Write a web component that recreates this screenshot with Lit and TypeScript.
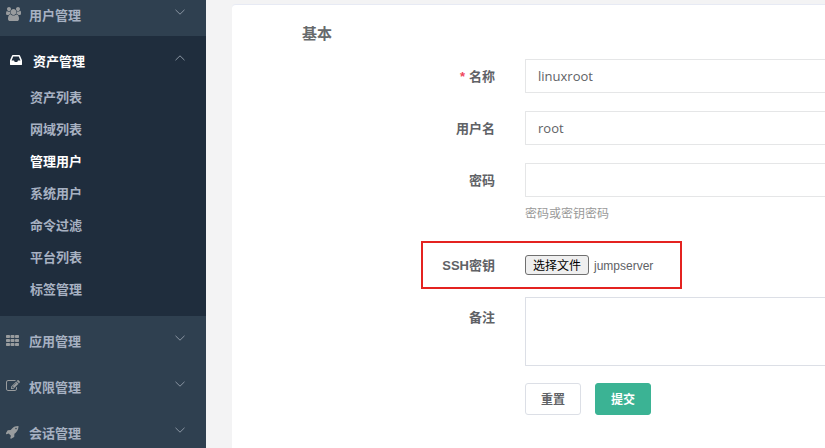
import { LitElement, html, css, svg } from "lit";
import { customElement, state } from "lit/decorators.js";

const icons = {
  users: { box: "0 0 1920 1792", body: svg`<path d="M593 896q-162 5-265 128h-134q-82 0-138-40.5t-56-118.5q0-353 124-353 6 0 43.5 21t97.5 42.5 119 21.5q67 0 133-23-5 37-5 66 0 154 86 284zm1071 637q0 120-73 189.5t-194 69.5h-874q-121 0-194-69.5t-73-189.5q0-53 3.5-103.5t14-109 26.5-108.5 43-97.5 62-81 85.5-53.5 111.5-20q10 0 43 21.5t73 48 107 48 135 21.5 135-21.5 107-48 73-48 43-21.5q61 0 111.5 20t85.5 53.5 62 81 43 97.5 26.5 108.5 14 109 3.5 103.5zm-1024-1277q0 106-75 181t-181 75-181-75-75-181 75-181 181-75 181 75 75 181zm704 384q0 159-112.5 271.5t-271.5 112.5-271.5-112.5-112.5-271.5 112.5-271.5 271.5-112.5 271.5 112.5 112.5 271.5zm576 225q0 78-56 118.5t-138 40.5h-134q-103-123-265-128 93-137 93-290 0-29-5-66 66 23 133 23 59 0 119-21.5t97.5-42.5 43.5-21q124 0 124 353zm-128-609q0 106-75 181t-181 75-181-75-75-181 75-181 181-75 181 75 75 181z"/>` },
  inbox: { box: "128 0 1792 1792", body: svg`<path d="M1151 960h316q-1-3-2.5-8t-2.5-8l-212-496h-708l-212 496q-1 2-2.5 8t-2.5 8h316l95 192h320zm513 30v482q0 26-19 45t-45 19h-1408q-26 0-45-19t-19-45v-482q0-62 25-123l238-552q10-25 36.5-42t52.5-17h832q26 0 52.5 17t36.5 42l238 552q25 61 25 123z"/>` },
  grid: { box: "64 0 1792 1792", body: [256, 768, 1280].map((y) => [64, 640, 1216].map((x) => svg`<rect x=${x} y=${y} width="512" height="384" rx="96"/>`)) },
  edit: { box: "0 0 1792 1792", body: svg`<path d="M888 1184l116-116-152-152-116 116v56h96v96h56zm440-720q-16-16-33 1l-350 350q-17 17-1 33t33-1l350-350q17-17 1-33zm80 594v190q0 119-84.5 203.5t-203.5 84.5h-832q-119 0-203.5-84.5t-84.5-203.5v-832q0-119 84.5-203.5t203.5-84.5h832q63 0 117 25 15 7 18 23 3 17-9 29l-49 49q-14 14-32 8-23-6-45-6h-832q-66 0-113 47t-47 113v832q0 66 47 113t113 47h832q66 0 113-47t47-113v-126q0-13 9-22l64-64q15-15 35-7t20 29zm-96-738l288 288-672 672h-288v-288zm444 132l-92 92-288-288 92-92q28-28 68-28t68 28l152 152q28 28 28 68t-28 68z"/>` },
  rocket: { box: "64 0 1792 1792", body: svg`<path d="M1440 448q0-40-28-68t-68-28-68 28-28 68 28 68 68 28 68-28 28-68zm224-288q0 249-75.5 430.5t-253.5 360.5q-81 80-195 176l-20 379q-2 16-16 26l-384 224q-7 4-16 4-12 0-23-9l-64-64q-13-14-8-32l85-276-281-281-276 85q-3 1-9 1-14 0-23-9l-64-64q-17-19-5-39l224-384q10-14 26-16l379-20q96-114 176-195 188-187 358-258t431-71q14 0 24 9.5t10 22.5z"/>` },
};

type IconName = keyof typeof icons;

interface Section {
  label: string;
  icon: IconName;
  children?: string[];
}

const sections: Section[] = [
  { label: "用户管理", icon: "users" },
  {
    label: "资产管理",
    icon: "inbox",
    children: ["资产列表", "网域列表", "管理用户", "系统用户", "命令过滤", "平台列表", "标签管理"],
  },
  { label: "应用管理", icon: "grid" },
  { label: "权限管理", icon: "edit" },
  { label: "会话管理", icon: "rocket" },
];

@customElement("side-nav")
class SideNav extends LitElement {
  static styles = css`
    :host {
      display: block;
      flex: none;
      width: 206px;
      overflow: hidden;
      background: #2f4050;
      color: #a7b1c2;
      font-family: Inter, "Noto Sans CJK SC", sans-serif;
      font-size: 13px;
      font-weight: 700;
    }
    .sections, .children { list-style: none; margin: 0; padding: 0; }
    /* The menu is scrolled down by part of its first entry. */
    .sections { margin-top: -10px; }
    a { color: inherit; text-decoration: none; }
    .head {
      display: flex;
      align-items: center;
      height: 46px;
      padding: 4px 21px 0 6px;
      box-sizing: border-box;
    }
    .icon { height: 14px; width: 14px; margin-bottom: 2px; fill: #999c9e; }
    .icon.users { width: 15px; }
    .label { flex: 1; margin-left: 9px; line-height: 20px; }
    .users + .label { margin-left: 8px; }
    .arrow {
      width: 10px;
      height: 6px;
      margin-bottom: 6px;
      fill: none;
      stroke: #8a95a2;
    }
    .open { background: #1f2d3d; padding-bottom: 11px; }
    .open .head { color: #fff; height: 45px; padding: 5px 21px 0 10px; }
    .open .icon { fill: #fff; }
    .child { display: block; padding: 6px 0 6px 30px; line-height: 20px; }
    .child.current { color: #fff; }
  `;

  render() {
    return html`<nav aria-label="主菜单">
      <ul class="sections">
        ${sections.map((s) => html`<li class=${s.children ? "open" : "closed"}>
          <a class="head" href="#">
            <svg class="icon ${s.icon}" viewBox=${icons[s.icon].box} aria-hidden="true">${icons[s.icon].body}</svg>
            <span class="label">${s.label}</span>
            <svg class="arrow" viewBox="0 0 10 6" aria-hidden="true">
              <path d=${s.children ? "M.5 5.2 5 .8l4.5 4.4" : "M.5 .8 5 5.2l4.5-4.4"} />
            </svg>
          </a>
          ${s.children
            ? html`<ul class="children">
                ${s.children.map((c) => html`<li><a class="child ${c === "管理用户" ? "current" : ""}" href="#">${c}</a></li>`)}
              </ul>`
            : null}
        </li>`)}
      </ul>
    </nav>`;
  }
}

@customElement("admin-user-form")
class AdminUserForm extends LitElement {
  static styles = css`
    :host {
      display: block;
      flex: 1;
      min-width: 0;
      margin: 4px 0 0 26px;
      background: #fff;
      border: solid #e7eaf4;
      border-width: 1px 0 0 0;
      border-radius: 4px 0 0 0;
      color: #606266;
      font-size: 13px;
    }
    h3 {
      margin: 0 0 14px 70px;
      padding-top: 18px;
      font-size: 15px;
      line-height: 22px;
      font-weight: 700;
      color: #676a6c;
    }
    .row {
      display: grid;
      grid-template-columns: 263px minmax(0, 1fr);
      column-gap: 30px;
      margin-bottom: 18px;
    }
    .label { height: 34px; text-align: right; line-height: 36px; font-weight: 700; }
    .required::before { content: "*"; color: #f0475c; margin-right: 4px; }
    .box {
      display: block;
      box-sizing: border-box;
      width: 100%;
      height: 34px;
      margin: 0;
      padding: 0 12px;
      border: solid #e5e6e7;
      border-width: 1px 0 1px 1px;
      border-radius: 1px 0 0 1px;
      background: #fff;
      color: #606266;
      font: 13px "Open Sans", "Noto Sans CJK SC", sans-serif;
      outline: none;
      resize: none;
    }
    .area { height: 69px; border-color: #dcdfe6; }
    .help { margin: 6px 0 0; font-size: 12px; line-height: 22px; color: #999; }
    .password { margin-bottom: 16px; }
    /* Highlighted row: the frame lies over the form. */
    .key { position: relative; padding: 7px 0; margin-bottom: 8px; }
    .key::after {
      content: "";
      position: absolute;
      inset: 0 auto 0 189px;
      width: 257px;
      border: 2px solid #e42320;
      pointer-events: none;
    }
    .file { display: flex; align-items: center; gap: 5px; font-size: 12px; }
    .pick {
      height: 20px;
      padding: 1px 7px 0;
      border: 1px solid #6f6f6f;
      border-radius: 3px;
      background: #efefef;
      color: #000;
      font: inherit;
      line-height: 18px;
    }
    .file-name { padding-top: 2px; }
    .note .label { padding-top: 3px; }
    .actions { display: flex; gap: 14px; margin-top: -1px; }
    .action {
      width: 56px;
      height: 32px;
      padding: 0 0 2px;
      border: 1px solid #dcdfe6;
      border-radius: 3px;
      background: #fff;
      color: #606266;
      font: inherit;
      font-size: 12px;
      font-weight: 700;
    }
    .submit { background: #3bb394; border-color: #3bb394; color: #fff; }
  `;

  @state() private fileName = "jumpserver";

  private openPicker() {
    this.renderRoot.querySelector<HTMLInputElement>("#key")!.click();
  }

  private picked(e: Event) {
    this.fileName = (e.target as HTMLInputElement).files?.[0]?.name ?? this.fileName;
  }

  render() {
    return html`<form @submit=${(e: Event) => e.preventDefault()}>
      <h3>基本</h3>
      <div class="row">
        <label class="label required" for="name">名称</label>
        <input class="box" id="name" value="linuxroot" required />
      </div>
      <div class="row">
        <label class="label" for="username">用户名</label>
        <input class="box" id="username" value="root" />
      </div>
      <div class="row password">
        <label class="label" for="password">密码</label>
        <div>
          <input class="box" id="password" type="password" aria-describedby="hint" />
          <p class="help" id="hint">密码或密钥密码</p>
        </div>
      </div>
      <div class="row key">
        <label class="label" for="key">SSH密钥</label>
        <div class="file">
          <input id="key" type="file" hidden @change=${this.picked} />
          <button class="pick" type="button" @click=${this.openPicker}>选择文件</button>
          <span class="file-name">${this.fileName}</span>
        </div>
      </div>
      <div class="row note">
        <label class="label" for="comment">备注</label>
        <textarea class="box area" id="comment"></textarea>
      </div>
      <div class="row">
        <span></span>
        <div class="actions">
          <button class="action" type="reset">重置</button>
          <button class="action submit" type="submit">提交</button>
        </div>
      </div>
    </form>`;
  }
}

@customElement("app-root")
class AppRoot extends LitElement {
  static styles = css`
    :host {
      display: flex;
      height: 100vh;
      overflow: hidden;
      background: #f3f3f4;
      font-family: "Liberation Sans", "Noto Sans CJK SC", sans-serif;
    }
  `;

  render() {
    return html`<side-nav></side-nav><admin-user-form></admin-user-form>`;
  }
}
